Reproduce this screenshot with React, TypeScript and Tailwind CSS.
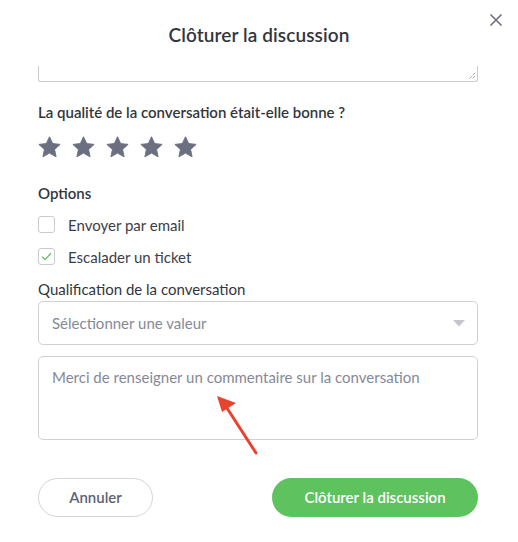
import { useState } from 'react';

function Star() {
  return (
    <svg width="23" height="22" viewBox="0 0 24 23" className="block">
      <path
        d="M12 0.8l3.3 7.1 7.8 0.9-5.8 5.3 1.6 7.7L12 17.9l-6.9 3.9 1.6-7.7-5.8-5.3 7.8-0.9z"
        fill="#6b6f80"
        stroke="#6b6f80"
        strokeWidth="1"
        strokeLinejoin="round"
      />
    </svg>
  );
}

function Checkbox({ checked, label }: { checked: boolean; label: string }) {
  return (
    <label className="flex items-center gap-[13px] h-[17px]">
      <span className="w-[17px] h-[17px] rounded-[3px] border border-[#c9cbd1] bg-white flex items-center justify-center">
        {checked && (
          <svg width="11" height="9" viewBox="0 0 11 9">
            <path d="M1 4.6l3 3L10 1.3" fill="none" stroke="#5cc15f" strokeWidth="1.3" />
          </svg>
        )}
      </span>
      <span className="text-[15px] leading-[18px] text-[#3b3e48]">{label}</span>
    </label>
  );
}

export default function App() {
  const [comment, setComment] = useState('');

  return (
    <div
      className="relative w-[518px] h-[542px] bg-white overflow-hidden"
      style={{ fontFamily: 'Lato, "Open Sans", sans-serif' }}
    >
      <div className="h-[66px] flex items-center justify-center pt-[4px]">
        <h1 className="text-[19px] leading-[24px] font-semibold text-[#33363d] tracking-[0.1px]">Clôturer la discussion</h1>
      </div>
      <button className="absolute top-[13px] right-[15px] text-[#6b6f80]">
        <svg width="14" height="14" viewBox="0 0 14 14">
          <path d="M1.5 1.5l11 11M12.5 1.5l-11 11" stroke="currentColor" strokeWidth="1.6" />
        </svg>
      </button>

      <div className="pl-[38px] pr-[40px] flex flex-col">
        <div className="relative h-[16px] border-x border-b border-[#c9cbd1] rounded-b-[3px]">
          <svg width="8" height="8" viewBox="0 0 8 8" className="absolute right-[1px] bottom-[1px]">
            <path d="M7 1L1 7M7 4L4 7" stroke="#777" strokeWidth="1" strokeDasharray="1 1" />
          </svg>
        </div>

        <p className="mt-[21px] text-[15px] leading-[18px] font-semibold text-[#33363d]">
          La qualité de la conversation était-elle bonne ?
        </p>
        <div className="mt-[15px] flex gap-[11px]">
          <Star />
          <Star />
          <Star />
          <Star />
          <Star />
        </div>

        <p className="mt-[26px] text-[15px] leading-[18px] font-semibold text-[#33363d]">Options</p>
        <div className="mt-[14px] flex flex-col gap-[15px]">
          <Checkbox checked={false} label="Envoyer par email" />
          <Checkbox checked label="Escalader un ticket" />
        </div>

        <p className="mt-[15px] text-[15px] leading-[18px] text-[#33363d]">Qualification de la conversation</p>
        <div className="mt-[3px] h-[44px] border border-[#cfd1d6] rounded-[5px] flex items-center justify-between pl-[13px] pr-[12px]">
          <span className="text-[15px] leading-[18px] text-[#858996]">Sélectionner une valeur</span>
          <svg width="12" height="7" viewBox="0 0 12 7">
            <path d="M0 0h12L6 6.5z" fill="#c3c5cb" />
          </svg>
        </div>

        <textarea
          value={comment}
          onChange={(e) => setComment(e.target.value)}
          placeholder="Merci de renseigner un commentaire sur la conversation"
          className="mt-[11px] h-[84px] resize-none border border-[#cfd1d6] rounded-[5px] px-[13px] pt-[11px] text-[15px] leading-[18px] text-[#33363d] placeholder:text-[#858996] outline-none"
        />

        <div className="mt-[38px] flex justify-between">
          <button className="w-[115px] h-[39px] rounded-full border border-[#d3d5da] text-[15px] font-semibold text-[#5e6272]">
            Annuler
          </button>
          <button className="w-[206px] h-[39px] rounded-full bg-[#5ec25f] text-[15px] font-semibold text-white">
            Clôturer la discussion
          </button>
        </div>
      </div>

      <svg width="50" height="70" viewBox="0 0 50 70" className="absolute left-[211px] top-[391px]">
        <path d="M45 62L14 14" stroke="#e8432e" strokeWidth="3" strokeLinecap="round" />
        <path d="M6 5l19 7-14 9z" fill="#e8432e" />
      </svg>
    </div>
  );
}
